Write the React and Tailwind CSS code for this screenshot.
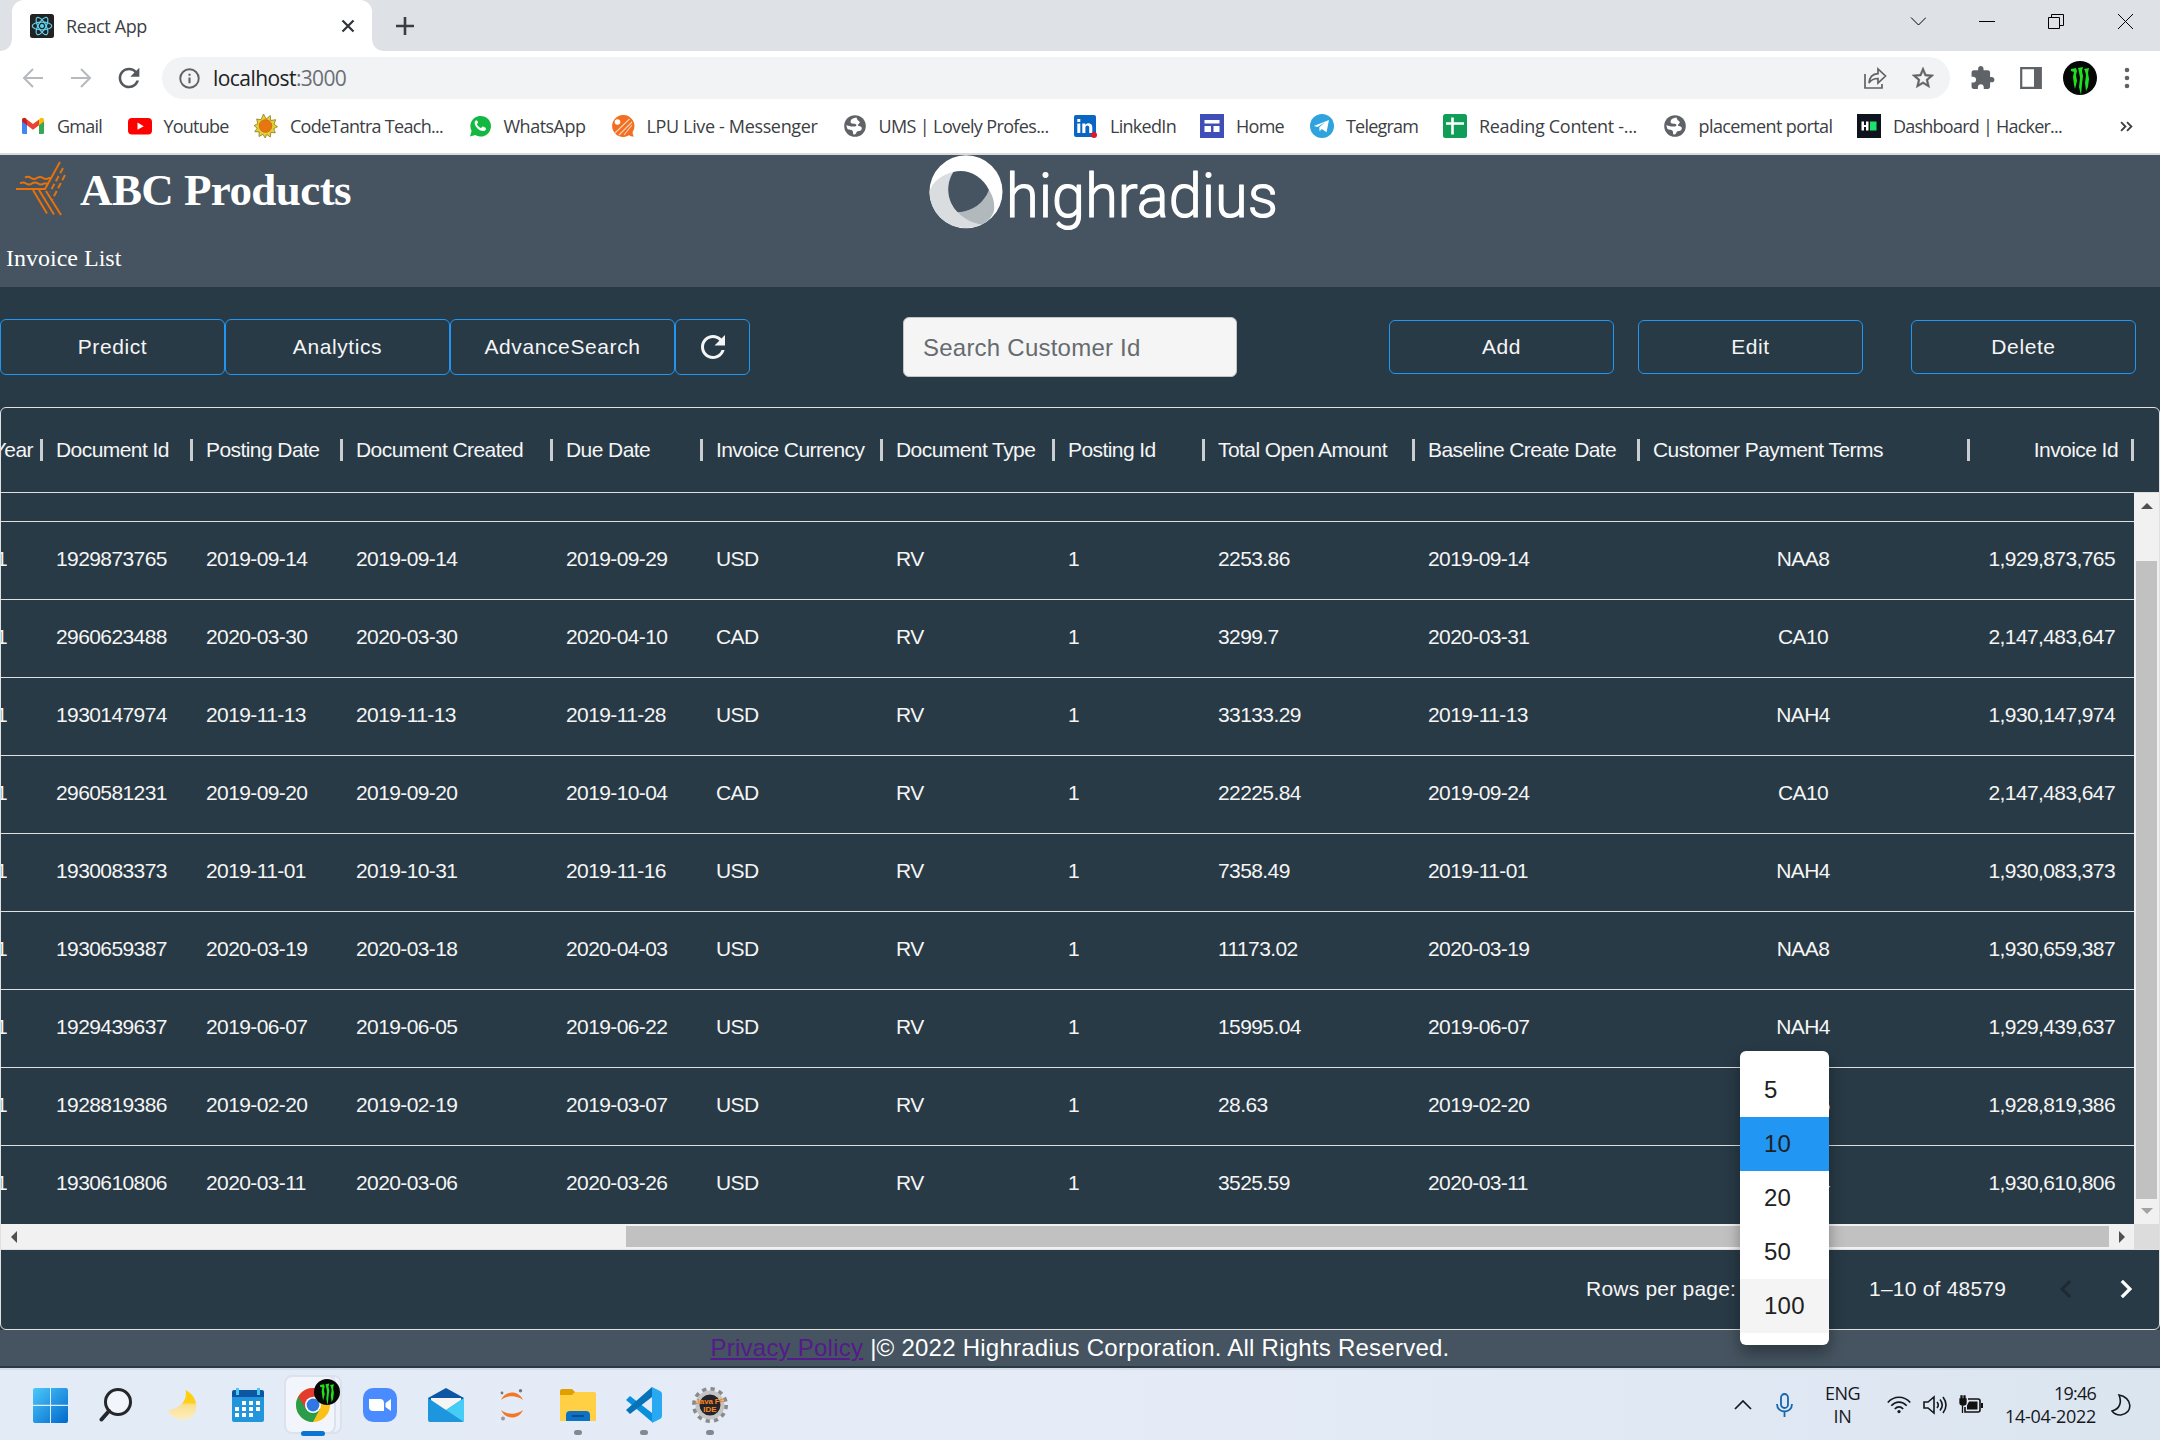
import React, { useLayoutEffect, useRef } from "react";

const REFRESH =
  "M17.65 6.35C16.2 4.9 14.21 4 12 4c-4.42 0-7.99 3.58-7.99 8s3.57 8 7.99 8c3.73 0 6.84-2.55 7.73-6h-2.08c-.82 2.33-3.04 4-5.65 4-3.31 0-6-2.69-6-6s2.69-6 6-6c1.66 0 3.14.69 4.22 1.78L13 11h7V4l-2.35 2.35z";

/* Text that is letter-spaced to fill a given width. */
function Fit({ w, className = "", children }) {
  const ref = useRef(null);
  useLayoutEffect(() => {
    const el = ref.current;
    el.style.letterSpacing = "0px";
    const n = el.textContent.length;
    const natural = el.getBoundingClientRect().width;
    el.style.letterSpacing = (w - natural) / n + "px";
  }, [w]);
  return (
    <span className={"inline-flex shrink-0 whitespace-pre " + className} style={{ width: w }}>
      <span ref={ref} className="inline-block whitespace-pre">{children}</span>
    </span>
  );
}

function Claws({ className }) {
  return (
    <svg viewBox="0 0 34 34" className={className}>
      <circle cx="17" cy="17" r="17" fill="#050805" />
      <g fill="#1ee01e">
        <path d="M8 8l5-1 1 3-1 4 1 6-2 8-1-4-1-8 1-5-3-1z" />
        <path d="M15 7l5-1-1 4 1 5-1 8-1 11-2-8 1-9-1-6z" />
        <path d="M21 8l5-1-1 5 1 6-1 8-2 4-1-8 1-8-1-4z" />
      </g>
    </svg>
  );
}

function Globe() {
  return (
    <svg viewBox="0 0 24 24" className="h-6 w-6">
      <circle cx="12" cy="12" r="10.8" fill="#5f6368" />
      <path d="M13.500 3.500c-3.500.3-5.500 1.500-6 4 0 1.600 1.200 2.200 2.800 2.300 2.600 0 3.300.6 3.100 1.600-.5 1.100-1.800.9-3.500 1.100-2 .1-4.300-.5-6.500-1.500.2 1.800.6 3 1.300 4.200 1.600.1 3.800.5 4.800 1.500.8 1 .2 2.300.8 3.500 1.400.5 2.600-.1 3-1.300.2-1.300 1-1.700 2.500-1.800 2 0 3-1.300 3-2.800 0-1.700-1.400-2.200-2.900-2.400-1.400-.3-1.200-1.400-.2-2 1-.6 1.500-1.200.7-2.300-.8-.9-2.400-1.500-2.900-4.100z" fill="#fff" />
    </svg>
  );
}

const bookmarkIcons = {
  gmail: (
    <svg viewBox="0 0 24 24" className="h-6 w-6">
      <path d="M1 6.500v12c0 1 .6 1.600 1.600 1.600H6V10z" fill="#4285f4" />
      <path d="M23 6.500v12c0 1-.6 1.600-1.600 1.600H18V10z" fill="#34a853" />
      <path d="M18 5.500v5.800l5-3.800V6c0-2-2.300-2.900-3.800-1.700z" fill="#fbbc04" />
      <path d="M6 11.300V5.400l6 4.500 6-4.500v5.900l-6 4.500z" fill="#ea4335" />
      <path d="M1 6v1.500l5 3.800V5.400L4.800 4.300C3.300 3.100 1 4 1 6z" fill="#c5221f" />
    </svg>
  ),
  youtube: (
    <svg viewBox="0 0 24 24" className="h-6 w-6">
      <rect x="0" y="4" width="24" height="16.500" rx="4" fill="#f00" />
      <path d="M9.500 8.600l6.300 3.600-6.300 3.600z" fill="#fff" />
    </svg>
  ),
  sun: (
    <svg viewBox="0 0 24 24" className="h-6 w-6">
      <path d="M9.500 0l2.600 5 4.200-3.500.4 5 5-.8-1.700 4.600 3.500 2.400-3.800 2 1.600 4.200-4.400-.6-.6 4.700-3.500-2.500-1.600 3.500-2.200-3.700-4 2.200.2-4.600-4.400-.2 2.400-3.500L0 11.500l3.800-1.800-1.200-4.600 4.400.6z" fill="#e2cf3a" stroke="#8f7a1a" strokeWidth=".8" />
      <circle cx="11.500" cy="12" r="6.400" fill="#e87511" stroke="#b85a10" strokeWidth=".5" />
    </svg>
  ),
  whatsapp: (
    <svg viewBox="0 0 24 24" className="h-6 w-6">
      <path d="M2 22.500l1.600-5.400A10.300 10.300 0 1 1 7.300 21z" fill="#12b83f" />
      <path d="M8.300 6.300c-.5 0-1.700 1-1.700 2.800 0 3 4.300 8 8.400 8 1.800 0 3-1.200 3-2.700 0-.5-3-2-3.400-1.800-.5.200-1.100 1.600-1.600 1.500-1.400-.4-3.600-2.500-4-3.900 0-.5 1.100-1 1.100-1.600 0-.5-.9-2.300-1.800-2.300z" fill="#fff" />
    </svg>
  ),
  lpu: (
    <svg viewBox="0 0 24 24" className="h-6 w-6">
      <path d="M12 1a11 11 0 1 0 6 20.300c1.500 1 3 1.300 5 1.200-1-1.500-1.400-2.500-1.400-4.500A11 11 0 0 0 12 1z" fill="#f26f21" />
      <circle cx="6.500" cy="8" r="2.800" fill="#fff" />
      <path d="M4 19L18.500 5M8 21L21 8M13 21l8-10" stroke="#fbd3b8" strokeWidth="1.100" />
    </svg>
  ),
  globe: <Globe />,
  linkedin: (
    <svg viewBox="0 0 24 24" className="h-6 w-6">
      <rect x="0" y="1" width="22" height="22" rx="2" fill="#0a66c2" />
      <path d="M3.300 9.500h3v9.500h-3zM3.300 5h3v3h-3zM8.300 9.500h3v1.300c1.700-2.500 7-2.300 7 2.200v6h-3.100v-5.400c0-3-3.800-2.700-3.800 0V19H8.300z" fill="#fff" />
      <circle cx="20" cy="21" r="3" fill="#e0162b" />
    </svg>
  ),
  home: (
    <svg viewBox="0 0 24 24" className="h-6 w-6">
      <rect width="24" height="24" fill="#3f4eb8" />
      <path d="M4.500 6h15v3.500h-15zM4.500 12h6.500v6H4.500zM13.500 12h6v6h-6z" fill="#fff" />
    </svg>
  ),
  telegram: (
    <svg viewBox="0 0 24 24" className="h-6 w-6">
      <circle cx="12" cy="12" r="12" fill="#2fa3dd" />
      <path d="M3.800 12L19 6l-2.500 12.300-4.600-3.300-2.300 2.300-.3-4 6-5.300-7.700 4.900z" fill="#fff" />
    </svg>
  ),
  sheet: (
    <svg viewBox="0 0 24 24" className="h-6 w-6">
      <rect width="24" height="24" rx="2.500" fill="#109d58" />
      <path d="M9.500 3.500v17M3 9.500h18" stroke="#fff" strokeWidth="2.600" />
    </svg>
  ),
  hacker: (
    <svg viewBox="0 0 24 24" className="h-6 w-6">
      <rect width="24" height="24" fill="#0e141e" />
      <path d="M4.500 7.500H7V11h2V7.500h2.500v9H9V13H7v3.500H4.500z" fill="#fff" />
      <rect x="13" y="7.500" width="6.500" height="9" fill="#1be36a" />
    </svg>
  ),
};

/* icon, label, label width, width of the whole entry */
const bookmarks = [
  ["gmail", "Gmail", 45, 106.5],
  ["youtube", "Youtube", 65, 126.5],
  ["sun", "CodeTantra Teach...", 153, 213.5],
  ["whatsapp", "WhatsApp", 82, 143],
  ["lpu", "LPU Live - Messenger", 171, 232],
  ["globe", "UMS | Lovely Profes...", 170, 231.5],
  ["linkedin", "LinkedIn", 66, 126],
  ["home", "Home", 48, 110],
  ["telegram", "Telegram", 72, 133],
  ["sheet", "Reading Content -...", 158, 219.5],
  ["globe", "placement portal", 134, 194.5],
  ["hacker", "Dashboard | Hacker...", 169, 206],
];

function TabStrip() {
  return (
    <div className="flex h-[51px] shrink-0 items-start bg-[#dee1e6]">
      <svg viewBox="0 0 12 51" className="h-[51px] w-3 shrink-0"><path d="M12 38c0 8-5 13-12 13h12z" fill="#fff" /></svg>
      <div className="flex h-[51px] w-[360px] items-center rounded-t-xl bg-white pl-[18px] pr-[17px]">
        <svg viewBox="0 0 24 24" className="h-6 w-6">
          <rect width="24" height="24" rx="2.500" fill="#222" />
          <g fill="none" stroke="#5fd3f0" strokeWidth="1.200">
            <ellipse cx="12" cy="12" rx="9.800" ry="3.800" />
            <ellipse cx="12" cy="12" rx="9.800" ry="3.800" transform="rotate(60 12 12)" />
            <ellipse cx="12" cy="12" rx="9.800" ry="3.800" transform="rotate(120 12 12)" />
          </g>
          <circle cx="12" cy="12" r="2" fill="#5fd3f0" />
        </svg>
        <Fit w={81} className="ml-3 text-[18px] leading-6 text-[#3c4043]">React App</Fit>
        <svg viewBox="0 0 14 14" className="ml-auto h-[14px] w-[14px]"><path d="M1.500 1.500l11 11M12.500 1.500l-11 11" stroke="#303438" strokeWidth="2.200" /></svg>
      </div>
      <svg viewBox="0 0 12 51" className="h-[51px] w-3 shrink-0"><path d="M0 38c0 8 5 13 12 13H0z" fill="#fff" /></svg>
      <svg viewBox="0 0 20 20" className="ml-[11px] mt-[15.500px] h-5 w-5"><path d="M10 1v18M1 10h18" stroke="#3a3d41" strokeWidth="2.600" /></svg>
      <div className="ml-auto mr-[27px] mt-[13px] flex gap-[53px] text-black">
        <svg viewBox="0 0 16 16" className="h-4 w-4"><path d="M1 4.500L8.500 12 16 4.500" fill="none" stroke="currentColor" strokeWidth="1" /></svg>
        <svg viewBox="0 0 16 16" className="h-4 w-4"><path d="M0 8.500h16" stroke="currentColor" strokeWidth="1" /></svg>
        <svg viewBox="0 0 16 16" className="h-4 w-4"><path d="M.5 4.500h11v11H.500zM3.500 4.500V1.500h12v11h-4" fill="none" stroke="currentColor" strokeWidth="1" /></svg>
        <svg viewBox="0 0 16 16" className="h-4 w-4"><path d="M1 1l15 15M16 1L1 16" stroke="currentColor" strokeWidth="1" /></svg>
      </div>
    </div>
  );
}

function Toolbar() {
  return (
    <div className="flex h-[54px] shrink-0 items-center bg-white pl-[22px] pr-[22px]">
      <svg viewBox="0 0 22 22" className="h-[22px] w-[22px]"><path d="M21 11H2.500M11 2L2 11l9 9" fill="none" stroke="#b6b9bd" strokeWidth="2" /></svg>
      <svg viewBox="0 0 22 22" className="ml-[26px] h-[22px] w-[22px]"><path d="M1 11h18.500M11 2l9 9-9 9" fill="none" stroke="#b6b9bd" strokeWidth="2" /></svg>
      <svg viewBox="3.500 3.500 17 17" className="ml-[26px] h-[22px] w-[22px]"><path d={REFRESH} fill="#54585d" /></svg>
      <div className="ml-[22px] flex h-[42px] w-[1788px] items-center rounded-full bg-[#f1f3f4] pl-[17px] pr-[15px]">
        <svg viewBox="0 0 22 22" className="h-[21px] w-[21px]"><circle cx="11" cy="11" r="9.700" fill="none" stroke="#5f6368" strokeWidth="2" /><path d="M11 10v6M11 6v2.200" stroke="#5f6368" strokeWidth="2.200" /></svg>
        <Fit w={83} className="ml-[13px] text-[21px] leading-7 text-[#202124]">localhost</Fit>
        <Fit w={50} className="text-[21px] leading-7 text-[#6b6f74]">:3000</Fit>
        <svg viewBox="0 0 24 24" className="ml-auto h-6 w-6" fill="none" stroke="#5f6368" strokeWidth="1.700"><path d="M2 8v14h17v-4M6 17c.5-6 3.500-9 9-9.300V3l7.500 7-7.500 7v-4.500c-4.500 0-7 1.500-9 4.500z" /></svg>
        <svg viewBox="1 1 22 22" className="ml-6 h-6 w-6"><path d="M22 9.240l-7.190-.62L12 2 9.190 8.630 2 9.240l5.460 4.730L5.820 21 12 17.270 18.180 21l-1.630-7.030L22 9.240zM12 15.400l-3.760 2.270 1-4.280-3.320-2.880 4.380-.38L12 6.100l1.710 4.040 4.380.38-3.320 2.880 1 4.280L12 15.400z" fill="#5f6368" stroke="#5f6368" strokeWidth=".4" /></svg>
      </div>
      <svg viewBox="1.500 1 22 22" className="ml-[21px] h-6 w-6"><path d="M20.500 11H19V7c0-1.100-.9-2-2-2h-4V3.500C13 2.120 11.880 1 10.500 1S8 2.120 8 3.500V5H4c-1.100 0-1.990.9-1.990 2v3.800H3.500c1.490 0 2.700 1.210 2.700 2.700s-1.210 2.700-2.700 2.700H2V20c0 1.100.9 2 2 2h3.800v-1.500c0-1.490 1.210-2.700 2.700-2.700 1.490 0 2.700 1.210 2.700 2.700V22H17c1.100 0 2-.9 2-2v-4h1.500c1.380 0 2.500-1.120 2.500-2.500S21.880 11 20.500 11z" fill="#5f6368" /></svg>
      <svg viewBox="0 0 22 22" className="ml-[25px] h-[22px] w-[22px]"><path d="M1.200 1.200h19.600v19.600H1.200z" fill="none" stroke="#5f6368" strokeWidth="2.200" /><path d="M14 1h7v20h-7z" fill="#5f6368" /></svg>
      <Claws className="ml-[21px] h-[34px] w-[34px]" />
      <svg viewBox="0 0 6 22" className="ml-auto mr-[8px] h-[22px] w-[6px]" fill="#5f6368"><circle cx="3" cy="3" r="2.300" /><circle cx="3" cy="11" r="2.300" /><circle cx="3" cy="19" r="2.300" /></svg>
    </div>
  );
}

function Bookmarks() {
  return (
    <div className="flex h-[50px] shrink-0 items-center border-b-2 border-[#d8dadb] bg-white pb-[6px] pl-[21px] pr-[27px]">
      {bookmarks.map(([icon, label, w, total], i) => (
        <div key={i} className="flex shrink-0 items-center gap-3" style={{ width: total }}>
          {bookmarkIcons[icon]}
          <Fit w={w} className="text-[18px] leading-6 text-[#3c4043]">{label}</Fit>
        </div>
      ))}
      <svg viewBox="0 0 12 10" className="ml-auto h-[11px] w-[13px]"><path d="M1 1l4 4-4 4M6.500 1l4 4-4 4" fill="none" stroke="#3c4043" strokeWidth="1.700" /></svg>
    </div>
  );
}

function PageHeader() {
  return (
    <div className="flex h-[132px] shrink-0 bg-[#455460] text-white">
      <div className="flex w-[929px] flex-col">
        <div className="flex h-[72px] items-center pl-4">
          <svg viewBox="0 0 50 56" className="h-14 w-[50px] overflow-visible" fill="none" stroke="#e8710a" strokeWidth="2">
            <path d="M0 26h29L44-1M9 14.500q3-1.500 6 .5t6 0 6 0 6 0h3M4 20.500q3-2 6 0t6 0 6 0 6 0h4M17 27l14 23.500M23 27l15 24.500M30 28l15 24" />
            <path d="M47 5L34 29M49 12L36 37" strokeDasharray="6 3" />
          </svg>
          <Fit w={271} className="ml-[14px] pb-[3px] font-['Liberation_Serif'] text-[45px] font-bold leading-[50px]">ABC Products</Fit>
        </div>
        <div className="mt-[17px] pl-[6px] font-['Liberation_Serif'] text-[24px] leading-7">Invoice List</div>
      </div>
      <svg viewBox="0 0 350 76" className="h-[76px] w-[350px] overflow-visible">
        <circle cx="37" cy="36.700" r="36.500" fill="#fff" />
        <path d="M24.300 17C12 20 3 27 .5 37A36.500 36.500 0 0 0 52.700 69.500C44 68 36 64 28.700 57.300 19 48 15 32 24.300 17z" fill="#d9dde0" />
        <path d="M60 35C55 48 44 56.500 28.700 57.300 35 64 44 68.500 52.700 69.500 60 66 64 60 65 56 66 48 64 41 60 35z" fill="#b1b9bd" />
        <path d="M24.300 17C37 13 53 20 60 35 55 48 44 56.500 28.700 57.300 18 47 16 30 24.300 17z" fill="#455460" />
        <text x="77" y="61.500" textLength="272" lengthAdjust="spacingAndGlyphs" fontFamily="Roboto" fontWeight="300" fontSize="61" fill="#fff" stroke="#fff" strokeWidth="1.200" strokeLinejoin="round">highradius</text>
      </svg>
    </div>
  );
}

function ActionButton({ children, className = "" }) {
  return (
    <button className={"flex shrink-0 items-center justify-center rounded-md border border-[#2196f3] text-[21px] leading-8 tracking-[0.6px] text-[#f5f5f5] " + className}>
      {children}
    </button>
  );
}

function Actions() {
  return (
    <div className="flex h-[120px] shrink-0 items-center">
      <ActionButton className="h-14 w-[225px]">Predict</ActionButton>
      <ActionButton className="h-14 w-[225px]">Analytics</ActionButton>
      <ActionButton className="h-14 w-[225px]">AdvanceSearch</ActionButton>
      <ActionButton className="h-14 w-[75px]">
        <svg viewBox="0 0 24 24" className="h-9 w-9" fill="currentColor"><path d={REFRESH} /></svg>
      </ActionButton>
      <div className="ml-[153px] flex h-[60px] w-[334px] items-center rounded-md border border-[#c4c4c4] bg-[#f5f5f5] pl-[19px] pt-[1px] text-[24px] leading-8 tracking-[0.23px] text-[#666b6f]">
        Search Customer Id
      </div>
      <ActionButton className="ml-[152px] h-[54px] w-[225px]">Add</ActionButton>
      <ActionButton className="ml-6 h-[54px] w-[225px]">Edit</ActionButton>
      <ActionButton className="ml-12 h-[54px] w-[225px]">Delete</ActionButton>
    </div>
  );
}

const GRID = "grid grid-cols-[42px_150px_150px_210px_150px_180px_172px_150px_210px_225px_330px_164px]";

const headers = ["Year", "Document Id", "Posting Date", "Document Created", "Due Date", "Invoice Currency", "Document Type", "Posting Id", "Total Open Amount", "Baseline Create Date", "Customer Payment Terms", "Invoice Id"];

const rows = [
  ["1929873765", "2019-09-14", "2019-09-14", "2019-09-29", "USD", "2253.86", "2019-09-14", "NAA8", "1,929,873,765"],
  ["2960623488", "2020-03-30", "2020-03-30", "2020-04-10", "CAD", "3299.7", "2020-03-31", "CA10", "2,147,483,647"],
  ["1930147974", "2019-11-13", "2019-11-13", "2019-11-28", "USD", "33133.29", "2019-11-13", "NAH4", "1,930,147,974"],
  ["2960581231", "2019-09-20", "2019-09-20", "2019-10-04", "CAD", "22225.84", "2019-09-24", "CA10", "2,147,483,647"],
  ["1930083373", "2019-11-01", "2019-10-31", "2019-11-16", "USD", "7358.49", "2019-11-01", "NAH4", "1,930,083,373"],
  ["1930659387", "2020-03-19", "2020-03-18", "2020-04-03", "USD", "11173.02", "2020-03-19", "NAA8", "1,930,659,387"],
  ["1929439637", "2019-06-07", "2019-06-05", "2019-06-22", "USD", "15995.04", "2019-06-07", "NAH4", "1,929,439,637"],
  ["1928819386", "2019-02-20", "2019-02-19", "2019-03-07", "USD", "28.63", "2019-02-20", "NAC6", "1,928,819,386"],
  ["1930610806", "2020-03-11", "2020-03-06", "2020-03-26", "USD", "3525.59", "2020-03-11", "NAH4", "1,930,610,806"],
];

function HeaderCell({ i, label }) {
  const first = i === 0;
  const right = first || i === 11;
  return (
    <div className={"flex h-full items-center overflow-hidden " + (right ? "justify-end" : "justify-between pl-[13px]")}>
      <span className={"whitespace-nowrap " + (first ? "mr-[7px]" : right ? "mr-[13px]" : "")}>{label}</span>
      <span className="h-[22px] w-[3px] shrink-0 bg-[#c9cdd0]" />
    </div>
  );
}

function DataRow({ r, last }) {
  const cells = [r[0], r[1], r[2], r[3], r[4], "RV", "1", r[5], r[6]];
  return (
    <div className={GRID + " h-[78px] items-center pb-[4px] " + (last ? "" : "border-b border-[#e0e0e0]")}>
      <div className="overflow-hidden"><span className="-ml-[5px]">1</span></div>
      {cells.map((c, i) => <div key={i} className="pl-[13px]">{c}</div>)}
      <div className="pr-[4px] text-center">{r[7]}</div>
      <div className="pr-[19px] text-right">{r[8]}</div>
    </div>
  );
}

function Menu() {
  const opts = [["5", ""], ["10", "bg-[#2196f3]"], ["20", ""], ["50", ""], ["100", "bg-[#f4f4f4]"]];
  return (
    <div className="absolute left-[1739px] top-[643px] z-10 h-[294px] w-[89px] rounded-md bg-white py-3 text-[24px] leading-9 tracking-[0.23px] text-[#212121] shadow-[0_8px_15px_rgba(0,0,0,0.35)]">
      {opts.map(([o, c]) => (
        <div key={o} className={"flex h-[54px] items-center pl-6 " + c}>{o}</div>
      ))}
    </div>
  );
}

function Table() {
  return (
    <div className="relative flex h-[923px] shrink-0 flex-col rounded-md border border-[#e0e0e0] bg-[#283a46] text-[21px] leading-8 text-[#f5f5f5]">
      <div className={GRID + " h-[85px] shrink-0 items-center border-b border-[#e0e0e0] tracking-[-0.57px]"}>
        {headers.map((h, i) => <HeaderCell key={h} i={i} label={h} />)}
      </div>
      <div className="flex h-[731px] shrink-0">
        <div className="w-[2133px] overflow-hidden tracking-[-0.6px]">
          <div className="h-[29px] border-b border-[#e0e0e0]" />
          {rows.map((r, i) => <DataRow key={r[0]} r={r} last={i === rows.length - 1} />)}
        </div>
        <div className="flex w-[25px] flex-col items-center bg-[#f1f1f1]">
          <svg viewBox="0 0 12 6" className="mb-[52px] mt-[10px] h-[6px] w-3"><path d="M0 6l6-6 6 6z" fill="#505050" /></svg>
          <div className="h-[638px] w-[21px] bg-[#c1c1c1]" />
          <svg viewBox="0 0 12 6" className="mt-[9px] h-[6px] w-3"><path d="M0 0h12L6 6z" fill="#a3a3a3" /></svg>
        </div>
      </div>
      <div className="flex h-[26px] shrink-0 border-b border-[#e0e0e0]">
        <div className="flex w-[2133px] items-center bg-[#f1f1f1] pl-[10px]">
          <svg viewBox="0 0 6 12" className="h-3 w-[6px]"><path d="M6 0v12L0 6z" fill="#505050" /></svg>
          <div className="ml-[609px] h-[21px] w-[1483px] bg-[#c1c1c1]" />
          <svg viewBox="0 0 6 12" className="ml-[10px] h-3 w-[6px]"><path d="M0 0v12l6-6z" fill="#505050" /></svg>
        </div>
        <div className="w-[25px] bg-[#dcdcdc]" />
      </div>
      <div className="flex h-[79px] items-center pb-[2px] pl-[1585px] tracking-[0.22px]">
        <span className="w-[283px]">Rows per page:</span>
        <span className="w-[179px]">1–10 of 48579</span>
        <svg viewBox="0 0 24 24" className="h-9 w-9" fill="#1c2a34"><path d="M15.410 16.590L10.830 12l4.580-4.590L14 6l-6 6 6 6z" /></svg>
        <svg viewBox="0 0 24 24" className="ml-[24px] h-9 w-9" fill="#fff"><path d="M8.590 16.590L13.170 12 8.590 7.410 10 6l6 6-6 6z" stroke="#fff" strokeWidth=".3" /></svg>
      </div>
      <Menu />
    </div>
  );
}

function Slot({ children, mark }) {
  return (
    <div className="relative flex h-[72px] w-[66px] items-center justify-center">
      {children}
      {mark && <span className="absolute bottom-[6px] left-[29px] h-[5px] w-2 rounded-full bg-[#85888e]" />}
    </div>
  );
}

function Taskbar() {
  return (
    <div className="flex h-[72px] shrink-0 items-center border-t-2 border-[#d5dce6] bg-linear-to-r from-[#e3ebf7] via-[#e5ecf8] to-[#dbe5f0] pl-[17px] pr-[29px] text-[#15181c]">
      <Slot>
        <svg viewBox="0 0 35 35" className="h-[35px] w-[35px]">
          <defs><linearGradient id="win" x1="0" y1="0" x2="1" y2="1"><stop offset="0" stopColor="#4cc8fa" /><stop offset="1" stopColor="#0068cc" /></linearGradient></defs>
          <path d="M0 2q0-2 2-2h15v16.800H0zM18 0h15q2 0 2 2v14.800H18zM0 18h17v17H2q-2 0-2-2zM18 18h17v15q0 2-2 2H18z" fill="url(#win)" />
        </svg>
      </Slot>
      <Slot>
        <svg viewBox="0 0 34 34" className="h-[34px] w-[34px]" fill="none" stroke="#25272a"><circle cx="19" cy="14" r="12.500" fill="#f2f5fb" strokeWidth="3" /><path d="M10 23L2.500 31.500" strokeWidth="4" strokeLinecap="round" /></svg>
      </Slot>
      <Slot>
        <svg viewBox="0 0 30 30" className="h-[31px] w-[31px]">
          <defs><linearGradient id="mn" x1="0" y1="0" x2="0" y2="1"><stop offset="0" stopColor="#ffd000" /><stop offset=".42" stopColor="#ffcf20" /><stop offset=".5" stopColor="#fbe08e" /><stop offset="1" stopColor="#fbeec4" /></linearGradient></defs>
          <path d="M18 0C20 10 13 18 1 19.500 5 30 20 32 26 24 31 16 28 5 18 0z" fill="url(#mn)" />
        </svg>
      </Slot>
      <Slot>
        <svg viewBox="0 0 32 34" className="h-[34px] w-8">
          <path d="M0 8h32v24q0 2-2 2H2q-2 0-2-2z" fill="#2196dc" /><path d="M0 4q0-2 2-2h28q2 0 2 2v5H0z" fill="#0c56a4" />
          <path d="M5.500 0v7M26.500 0v7" stroke="#4cc8f0" strokeWidth="3" />
          <path d="M10 13h4v4h-4zM17 13h4v4h-4zM24 13h4v4h-4zM3 19h4v4H3zM10 19h4v4h-4zM17 19h4v4h-4zM24 19h4v4h-4zM3 25h4v4H3zM10 25h4v4h-4zM17 25h4v4h-4z" fill="#fff" />
        </svg>
      </Slot>
      <div className="relative flex h-[72px] w-[66px] items-center justify-center">
        <div className="absolute left-[8px] top-[6px] h-[59px] w-[53px] rounded-lg border-2 border-[#dbe2ee] bg-[#edf2fa]" />
        <div className="absolute left-[3px] top-[6px] h-[59px] w-[52px] rounded-lg border-2 border-[#dbe2ee] bg-[#f2f6fc]" />
        <svg viewBox="0 0 34 34" className="relative -left-[1px] h-[34px] w-[34px]">
          <circle cx="17" cy="17" r="17" fill="#fbc116" />
          <path d="M17 17L2.300 8.500A17 17 0 0 0 17 34l7-13z" fill="#2a9d4b" />
          <path d="M2.300 8.500A17 17 0 0 1 31.700 8.500H17l-7 12.500z" fill="#e33b2e" />
          <circle cx="17" cy="17" r="8" fill="#fff" /><circle cx="17" cy="17" r="6.400" fill="#2f77e5" />
        </svg>
        <Claws className="absolute left-[33px] top-[10px] h-[26px] w-[26px]" />
        <span className="absolute bottom-[5px] left-[20px] h-[5px] w-6 rounded-full bg-[#0a74d0]" />
      </div>
      <Slot>
        <svg viewBox="0 0 34 34" className="h-[34px] w-[34px]"><rect width="34" height="34" rx="10" fill="#4a8cff" /><path d="M6 11h11q4 0 4 4v8H10q-4 0-4-4zM22.500 15l5.500-4v12l-5.500-4z" fill="#fff" /></svg>
      </Slot>
      <Slot>
        <svg viewBox="0 0 36 34" className="h-[34px] w-9"><path d="M0 10L18 0l18 10v5H0z" fill="#0c56a4" /><path d="M3 10h30v8L18 28 3 18z" fill="#f5f5f5" /><path d="M0 10l18 12 18-12v22q0 2-2 2H2q-2 0-2-2z" fill="#1d96de" /><path d="M36 10v24L18 22z" fill="#46cdf5" /></svg>
      </Slot>
      <Slot>
        <svg viewBox="0 0 24 32" className="h-8 w-6"><path d="M1 11C5 1 19 1 23 11 16 6 8 6 1 11zM1 21c4 10 18 10 22 0-7 5-15 5-22 0z" fill="#f37726" /><circle cx="2" cy="4" r="1.400" fill="#777" /><circle cx="20.500" cy="1.800" r="1.700" fill="#777" /><circle cx="3" cy="29.500" r="2" fill="#999" /></svg>
      </Slot>
      <Slot mark>
        <svg viewBox="0 0 36 32" className="h-8 w-9"><path d="M0 2q0-2 2-2h10l4 4-3 4H0z" fill="#dfa000" /><path d="M0 6h12l3-3h19q2 0 2 2v27H0z" fill="#ffd044" /><path d="M6 32v-6q0-4 4-4h16q4 0 4 4v6z" fill="#0e72c4" /><path d="M12 27h12" stroke="#084d92" strokeWidth="2" /></svg>
      </Slot>
      <Slot mark>
        <svg viewBox="0 0 36 36" className="h-9 w-9"><path d="M4 9L26 26v9L0 13z" fill="#0a8fdc" /><path d="M4 27L26 10V0L0 23z" fill="#0672ba" /><path d="M26 0l8 4q2 1 2 3v22q0 2-2 3l-8 4z" fill="#28a9f2" /></svg>
      </Slot>
      <Slot mark>
        <svg viewBox="0 0 36 36" className="h-9 w-9"><circle cx="18" cy="18" r="16" fill="none" stroke="#8a8a8a" strokeWidth="4" strokeDasharray="4.200 4.180" /><circle cx="18" cy="18" r="12.500" fill="#26222c" stroke="#c4c4c4" strokeWidth="4" /><text x="18" y="17" textAnchor="middle" fontFamily="Liberation Sans" fontWeight="bold" fontSize="8" textLength="29" fill="#f58a1f">Java FF</text><text x="18" y="25" textAnchor="middle" fontFamily="Liberation Sans" fontWeight="bold" fontSize="8" fill="#f58a1f">IDE</text></svg>
      </Slot>

      <svg viewBox="0 0 18 10" className="ml-auto h-[10px] w-[18px]"><path d="M1 9l8-8 8 8" fill="none" stroke="currentColor" strokeWidth="1.700" /></svg>
      <svg viewBox="0 0 17 24" className="ml-[24px] h-6 w-[17px]" fill="none" stroke="#1566ad" strokeWidth="1.800"><rect x="5" y="1" width="7" height="14" rx="3.500" /><path d="M1 11c0 10 15 10 15 0M8.500 18.500V24" /></svg>
      <div className="ml-8 flex w-[35px] flex-col items-center text-[18px] leading-[23px]">
        <Fit w={35}>ENG</Fit>
        <Fit w={18}>IN</Fit>
      </div>
      <svg viewBox="0 0 24 18" className="ml-[27px] h-[18px] w-6" fill="none" stroke="currentColor" strokeWidth="1.700"><path d="M.8 6.500C7-.5 17-.5 23.200 6.500M4.300 9.800c4.500-5 10.900-5 15.400 0M7.800 13c2.500-2.800 5.900-2.800 8.400 0" /><circle cx="12" cy="15.600" r="1.600" fill="currentColor" stroke="none" /></svg>
      <svg viewBox="0 0 24 20" className="ml-3 h-5 w-6" fill="none" stroke="currentColor" strokeWidth="1.600"><path d="M1 7h4l6-5v16l-6-5H1zM14 7q2.500 3 0 6M17 4.500q4.500 5.500 0 11M20 2q6 8 0 16" /></svg>
      <svg viewBox="0 0 24 20" className="ml-3 h-5 w-6"><path d="M1 4h6v4q0 2-3 2-3 0-3-2zM2 1h1v3H2zM5 1h1v3H5zM3.500 9v9" fill="#111" stroke="#111" strokeWidth="1.300" /><path d="M9 4h10q2 0 2 2v9q0 2-2 2H6v-5" fill="none" stroke="#111" strokeWidth="1.600" /><path d="M10 6.500h8.500v8H8v-4zM22 8h2v5h-2z" fill="#111" /></svg>
      <div className="ml-[22px] flex flex-col items-end text-[18px] leading-[23px]">
        <Fit w={42}>19:46</Fit>
        <Fit w={91}>14-04-2022</Fit>
      </div>
      <svg viewBox="0 0 20 22" className="ml-[15px] h-[22px] w-5"><path d="M8 1c13 2 15 18 2 20-3.500.3-7-1.500-9-4C9 15 11 8 8 1z" fill="none" stroke="currentColor" strokeWidth="1.600" /></svg>
    </div>
  );
}

export default function App() {
  return (
    <div className="flex h-[1440px] w-[2160px] flex-col overflow-hidden bg-[#283a46] font-['Open_Sans',sans-serif]">
      <TabStrip />
      <Toolbar />
      <Bookmarks />
      <div className="flex flex-col font-['Liberation_Sans',Arial,sans-serif]">
        <PageHeader />
        <Actions />
        <Table />
        <div className="mb-[2px] flex h-9 shrink-0 items-center justify-center whitespace-pre bg-[#455460] text-[24px] leading-8 tracking-[0.24px] text-white">
          <span className="text-[#551a8b] underline decoration-2 underline-offset-2">Privacy Policy</span>
          <span> |© 2022 Highradius Corporation. All Rights Reserved.</span>
        </div>
      </div>
      <Taskbar />
    </div>
  );
}
